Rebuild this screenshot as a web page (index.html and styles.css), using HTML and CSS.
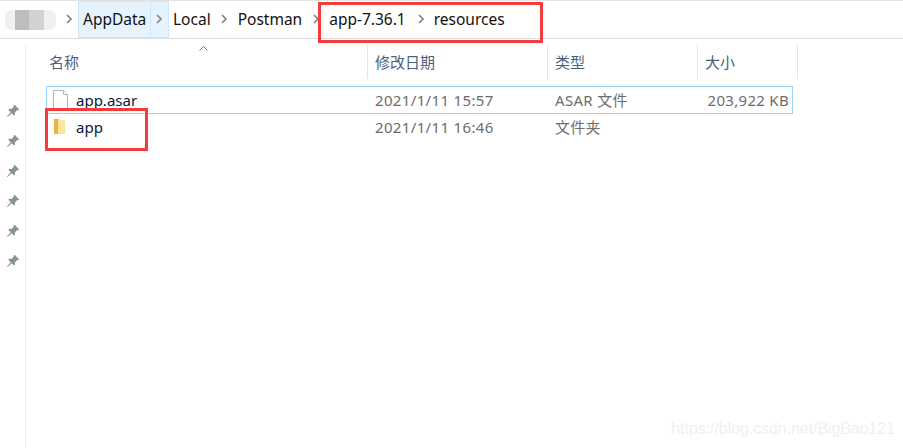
FILE: index.html
```html
<!DOCTYPE html>
<html lang="zh">
<head>
<meta charset="utf-8">
<title>resources</title>
<link rel="stylesheet" href="styles.css">
</head>
<body>
<div class="window">
  <nav class="crumbs">
    <div class="blur"><i class="b1"></i><i class="b2"></i><i class="b3"></i><i class="b4"></i></div>
    <svg class="chev c0" viewBox="0 0 7 10"><path d="M1 1l4 4-4 4"/></svg>
    <div class="hot"><span class="hot-label">AppData</span><span class="hot-arrow"><svg class="chev" viewBox="0 0 7 10"><path d="M1 1l4 4-4 4"/></svg></span></div>
    <span class="crumb c-local">Local</span>
    <svg class="chev c2" viewBox="0 0 7 10"><path d="M1 1l4 4-4 4"/></svg>
    <span class="crumb c-postman">Postman</span>
    <svg class="chev c3" viewBox="0 0 7 10"><path d="M1 1l4 4-4 4"/></svg>
    <span class="crumb c-app">app-7.36.1</span>
    <svg class="chev c4" viewBox="0 0 7 10"><path d="M1 1l4 4-4 4"/></svg>
    <span class="crumb c-res">resources</span>
  </nav>
  <div class="body">
    <aside class="pins">
      <svg class="pin" viewBox="0 0 14 14"><path d="M8.6.8l4.6 4.6-1.1.9-.8-.3-2.4 2.4.2 2.2-1 1-2.400-2.400L1.600 13 1 12.400l3.700-4.200-2.400-2.400 1-1 2.200.2L7.900 2.600l-.3-.8z"/></svg>
      <svg class="pin" viewBox="0 0 14 14"><path d="M8.6.8l4.6 4.6-1.1.9-.8-.3-2.4 2.4.2 2.2-1 1-2.400-2.400L1.600 13 1 12.400l3.700-4.200-2.400-2.400 1-1 2.200.2L7.900 2.600l-.3-.8z"/></svg>
      <svg class="pin" viewBox="0 0 14 14"><path d="M8.6.8l4.6 4.6-1.1.9-.8-.3-2.4 2.4.2 2.2-1 1-2.400-2.400L1.600 13 1 12.400l3.700-4.200-2.400-2.400 1-1 2.200.2L7.900 2.600l-.3-.8z"/></svg>
      <svg class="pin" viewBox="0 0 14 14"><path d="M8.6.8l4.6 4.6-1.1.9-.8-.3-2.4 2.4.2 2.2-1 1-2.400-2.400L1.600 13 1 12.400l3.700-4.200-2.400-2.400 1-1 2.200.2L7.900 2.600l-.3-.8z"/></svg>
      <svg class="pin" viewBox="0 0 14 14"><path d="M8.6.8l4.6 4.6-1.1.9-.8-.3-2.4 2.4.2 2.2-1 1-2.400-2.400L1.600 13 1 12.400l3.700-4.200-2.400-2.400 1-1 2.200.2L7.900 2.600l-.3-.8z"/></svg>
      <svg class="pin" viewBox="0 0 14 14"><path d="M8.6.8l4.6 4.6-1.1.9-.8-.3-2.4 2.4.2 2.2-1 1-2.400-2.400L1.600 13 1 12.400l3.700-4.200-2.400-2.400 1-1 2.200.2L7.900 2.600l-.3-.8z"/></svg>
    </aside>
    <main class="list">
      <div class="head">
        <div class="col h-name">名称<svg class="sort" viewBox="0 0 9 5"><path d="M.5 4.500l4-4 4 4"/></svg></div>
        <div class="col h-date">修改日期</div>
        <div class="col h-type">类型</div>
        <div class="col h-size">大小</div>
      </div>
      <div class="row selected">
        <div class="cell name">
          <svg class="icon" viewBox="0 0 15 20"><path class="doc" d="M.5.500h10l4 4v15H.5z"/><path class="doc" d="M10.500.500v4h4"/></svg>
          <span>app.asar</span>
        </div>
        <div class="cell date">2021/1/11 15:57</div>
        <div class="cell type">ASAR 文件</div>
        <div class="cell size">203,922 KB</div>
      </div>
      <div class="row">
        <div class="cell name">
          <svg class="icon" viewBox="0 0 15 20"><path d="M1 2h5l1 1.500h5V17H1z" fill="#f3cc69"/><path d="M5 4h7v13H5z" fill="#fbe49c"/><path d="M1 2h4v15H1z" fill="#e8b544"/></svg>
          <span>app</span>
        </div>
        <div class="cell date">2021/1/11 16:46</div>
        <div class="cell type">文件夹</div>
        <div class="cell size"></div>
      </div>
    </main>
  </div>
  <div class="mark mark-path"></div>
  <div class="mark mark-file"></div>
  <div class="watermark">https://blog.csdn.net/BigBao121</div>
</div>
</body>
</html>
```

FILE: styles.css
```css
* { box-sizing: border-box; }
html, body { margin: 0; padding: 0; background: #fff; }
body { font-family: "Noto Sans", "Noto Sans CJK SC", "Liberation Sans", sans-serif; overflow: hidden; }
.window { position: relative; width: 903px; height: 448px; overflow: hidden; display: flex; flex-direction: column; }

.crumbs { height: 39px; flex: none; display: flex; align-items: stretch; border-top: 1px solid #e4e4e4; border-bottom: 1px solid #dcdcdc; font-size: 15.5px; color: #111; }
.crumb { align-self: center; line-height: 20px; margin-top: -1px; white-space: nowrap; }
.blur { width: 51px; height: 20px; margin: 9px 0 0 5px; display: flex; border-radius: 7px; overflow: hidden; filter: blur(.6px); }
.blur i { display: block; height: 100%; }
.b1 { width: 10px; background: #f0f0f0; }
.b2 { width: 14px; background: #bdbdbd; }
.b3 { width: 15px; background: #d2d2d2; }
.b4 { width: 12px; background: #f0f0f0; }
.chev { width: 7px; height: 10px; flex: none; align-self: center; margin-top: -2px; }
.chev path { fill: none; stroke: #808080; stroke-width: 1.6; }
.c0 { margin-left: 10px; margin-right: 5px; }
.hot { display: flex; height: 37px; background: #e5f3ff; border: 1px solid #cce8ff; }
.hot-label { width: 72px; padding-left: 4px; line-height: 35px; border-right: 1px solid #cce8ff; }
.hot-arrow { width: 17px; display: flex; justify-content: center; align-items: center; }
.hot-arrow .chev { margin-top: -2px; }
.c-local { margin-left: 4px; }
.c2 { margin-left: 10px; margin-right: 10px; }
.c3 { margin-left: 11px; margin-right: 9px; }
.c4 { margin-left: 12px; margin-right: 9px; }

.body { flex: 1; display: flex; min-height: 0; }
.pins { width: 26px; flex: none; border-right: 1px solid #f0f0f0; padding: 59px 0 0 6px; display: flex; flex-direction: column; gap: 16px; margin-top: 6px; }
.pin { width: 14px; height: 14px; display: block; }
.pin path { fill: #87929a; }

.list { flex: 1; min-width: 0; padding-left: 20px; }
.head { display: flex; height: 34px; margin-top: 6px; font-size: 15px; color: #4c607a; }
.col { height: 34px; line-height: 34px; padding-left: 7px; border-right: 1px solid #e5e5e5; position: relative; flex: none; }
.h-name { width: 322px; padding-left: 3px; }
.h-date { width: 180px; }
.h-type { width: 150px; }
.h-size { width: 100px; }
.sort { position: absolute; left: 153px; top: 1px; width: 9px; height: 5px; }
.sort path { fill: none; stroke: #7a7a7a; stroke-width: 1; }

.row { display: flex; align-items: center; height: 28px; width: 747px; border: 1px solid transparent; margin-bottom: -1px; font-size: 15px; color: #6d6d6d; }
.row.selected { margin-top: 7px; border-color: #99d1ff; }
.cell { white-space: nowrap; flex: none; line-height: 26px; }
.name { width: 322px; display: flex; align-items: center; padding-left: 6px; color: #0a1a3c; }
.name span { margin-left: 8px; }
.icon { width: 15px; height: 20px; flex: none; }
.doc { fill: #fff; stroke: #b4b4b4; stroke-width: 1; }
.date { width: 180px; padding-left: 6px; letter-spacing: .35px; }
.type { width: 150px; padding-left: 6px; letter-spacing: .3px; }
.size { width: 93px; text-align: right; padding-right: 3px; letter-spacing: .3px; }

.mark { position: absolute; border: 3px solid #f53c3c; pointer-events: none; }
.mark-path { left: 318px; top: 2px; width: 225px; height: 41px; }
.mark-file { left: 45px; top: 108px; width: 103px; height: 43px; }
.watermark { position: absolute; right: 8px; top: 420px; font-family: "Liberation Sans", sans-serif; font-size: 15.85px; color: #efefef; white-space: nowrap; }
```
